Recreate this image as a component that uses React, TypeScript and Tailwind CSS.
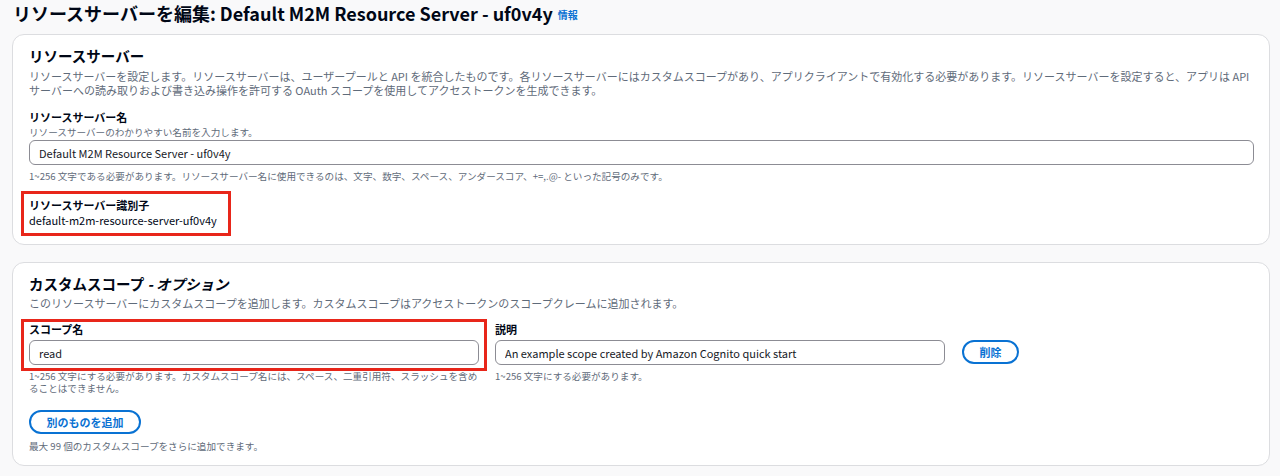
import React from 'react'

const inputCls =
  'block h-[25px] w-full rounded-[6px] border border-[#8c8c94] bg-white px-[9px] text-[11px] leading-[23px] text-[#16191f] outline-none'

function Label({ children }: { children: React.ReactNode }) {
  return <div className="text-[11px] leading-[14px] font-bold text-[#000716]">{children}</div>
}

function Hint({ children, className = '' }: { children: React.ReactNode; className?: string }) {
  return <div className={`text-[9.6px] leading-[12px] text-[#5f6b7a] ${className}`}>{children}</div>
}

function PillButton({ children, width }: { children: React.ReactNode; width: string }) {
  return (
    <button
      className={`flex h-[24px] ${width} items-center justify-center rounded-full border-2 border-[#0972d3] bg-white text-[11px] font-bold text-[#0972d3]`}
    >
      {children}
    </button>
  )
}

export default function App() {
  return (
    <div className="h-[476px] overflow-hidden bg-[#f9f9fa] pl-3 pr-[10px] font-['Noto_Sans_CJK_JP','Noto_Sans',sans-serif] text-[#000716]">
      {/* Page title */}
      <div className="flex h-[26px] items-center pl-[1px]">
        <h1 className="text-[18px] leading-[26px] font-bold text-[#000716]">
          リソースサーバーを編集: Default M2M Resource Server - uf0v4y
        </h1>
        <a className="ml-[5px] mt-[2px] text-[10px] font-bold text-[#0972d3]">情報</a>
      </div>

      {/* Resource server */}
      <section className="mt-[8px] rounded-[12px] border border-[#dcdde0] bg-white pt-[11px] pr-[15px] pb-[17px] pl-[16px]">
        <h2 className="text-[14.5px] leading-[20px] font-bold">リソースサーバー</h2>
        <p className="mt-[3px] text-[11px] leading-[14px] text-[#5f6b7a]">
          リソースサーバーを設定します。リソースサーバーは、ユーザープールと API を統合したものです。各リソースサーバーにはカスタムスコープがあり、アプリクライアントで有効化する必要があります。リソースサーバーを設定すると、アプリは API
          <br />
          サーバーへの読み取りおよび書き込み操作を許可する OAuth スコープを使用してアクセストークンを生成できます。
        </p>

        <div className="mt-[13px]">
          <Label>リソースサーバー名</Label>
          <Hint className="mt-[2px]">リソースサーバーのわかりやすい名前を入力します。</Hint>
          <input className={`mt-[2px] ${inputCls}`} defaultValue="Default M2M Resource Server - uf0v4y" readOnly />
          <Hint className="mt-[5px]">
            1~256 文字である必要があります。リソースサーバー名に使用できるのは、文字、数字、スペース、アンダースコア、+=,.@- といった記号のみです。
          </Hint>
        </div>

        <div className="relative mt-[16px] w-fit">
          <Label>リソースサーバー識別子</Label>
          <div className="mt-[1px] text-[11px] leading-[14px] text-[#000716]">default-m2m-resource-server-uf0v4y</div>
          <div className="pointer-events-none absolute -top-[7px] -left-[8px] h-[45px] w-[210px] border-[3px] border-[#e8261a]" />
        </div>
      </section>

      {/* Custom scopes */}
      <section className="mt-[17px] rounded-[12px] border border-[#dcdde0] bg-white pt-[11px] pr-[15px] pb-[13px] pl-[16px]">
        <h2 className="text-[14.5px] leading-[20px] font-bold">
          カスタムスコープ <span className="italic">- オプション</span>
        </h2>
        <p className="mt-[2px] text-[11px] leading-[14px] text-[#5f6b7a]">
          このリソースサーバーにカスタムスコープを追加します。カスタムスコープはアクセストークンのスコープクレームに追加されます。
        </p>

        <div className="mt-[12px] flex items-start gap-[16px]">
          <div className="relative w-[450px]">
            <Label>スコープ名</Label>
            <input className={`mt-[4px] ${inputCls}`} defaultValue="read" readOnly />
            <Hint className="mt-[5px]">
              1~256 文字にする必要があります。カスタムスコープ名には、スペース、二重引用符、スラッシュを含め
              <br />
              ることはできません。
            </Hint>
            <div className="pointer-events-none absolute -top-[3px] -left-[8px] h-[52px] w-[466px] border-[3px] border-[#e8261a]" />
          </div>
          <div className="w-[450px]">
            <Label>説明</Label>
            <input
              className={`mt-[4px] ${inputCls}`}
              defaultValue="An example scope created by Amazon Cognito quick start"
              readOnly
            />
            <Hint className="mt-[5px]">1~256 文字にする必要があります。</Hint>
          </div>
          <div className="ml-[1px] mt-[18px]">
            <PillButton width="w-[57px]">削除</PillButton>
          </div>
        </div>

        <div className="mt-[16px]">
          <PillButton width="w-[112px]">別のものを追加</PillButton>
        </div>
        <Hint className="mt-[6px]">最大 99 個のカスタムスコープをさらに追加できます。</Hint>
      </section>
    </div>
  )
}
